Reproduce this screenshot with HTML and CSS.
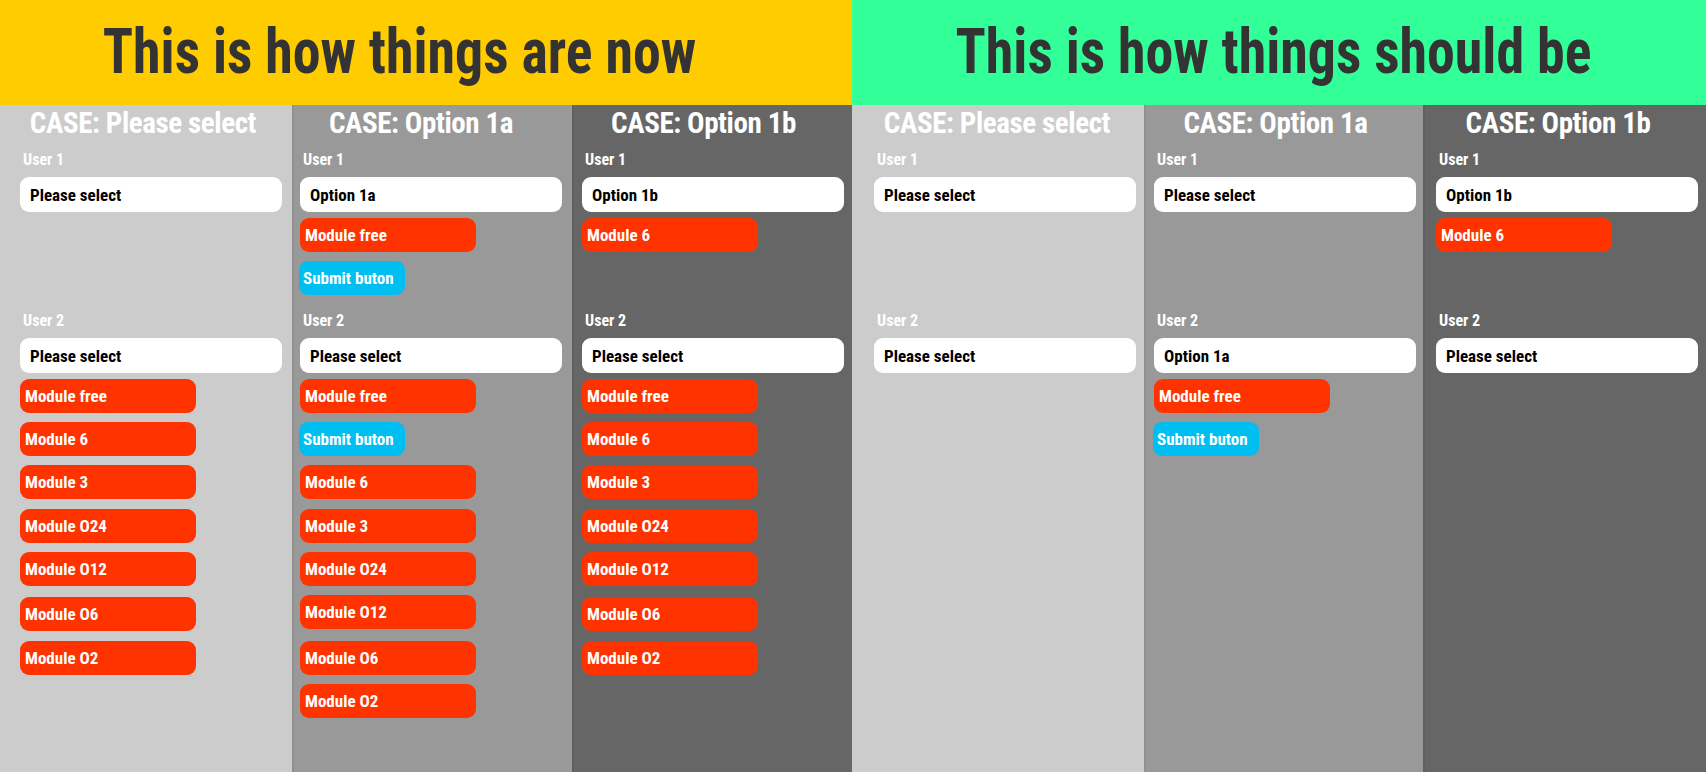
FILE: index.html
```html
<!DOCTYPE html>
<html lang="en">

<head>
    <meta charset="UTF-8">
    <meta name="viewport" content="width=device-width, initial-scale=1.0">
    <title>Cases - now vs should be</title>
    <link rel="stylesheet" href="styles.css">
</head>

<body>
    <main class="board">
        <!-- left half: current behaviour -->
        <section class="half now">
            <h1 class="banner"><span>This is how things are now</span></h1>
            <div class="cases">
                <div class="case light col-1">
                    <h2 class="case-title">CASE: Please select</h2>
                    <div class="case-body">
                        <div class="user">
                            <div class="user-label">User 1</div>
                            <div class="select">Please select</div>
                        </div>
                        <div class="user">
                            <div class="user-label">User 2</div>
                            <div class="select">Please select</div>
                            <div class="modules">
                                <div class="module">Module free</div>
                                <div class="module">Module 6</div>
                                <div class="module">Module 3</div>
                                <div class="module">Module O24</div>
                                <div class="module">Module O12</div>
                                <div class="module wide-gap">Module O6</div>
                                <div class="module">Module O2</div>
                            </div>
                        </div>
                    </div>
                </div>

                <div class="case mid col-2">
                    <h2 class="case-title">CASE: Option 1a</h2>
                    <div class="case-body">
                        <div class="user">
                            <div class="user-label">User 1</div>
                            <div class="select">Option 1a</div>
                            <div class="modules">
                                <div class="module">Module free</div>
                                <div class="submit">Submit buton</div>
                            </div>
                        </div>
                        <div class="user">
                            <div class="user-label">User 2</div>
                            <div class="select">Please select</div>
                            <div class="modules">
                                <div class="module">Module free</div>
                                <div class="submit">Submit buton</div>
                                <div class="module">Module 6</div>
                                <div class="module">Module 3</div>
                                <div class="module">Module O24</div>
                                <div class="module">Module O12</div>
                                <div class="module wide-gap">Module O6</div>
                                <div class="module">Module O2</div>
                            </div>
                        </div>
                    </div>
                </div>

                <div class="case dark col-3">
                    <h2 class="case-title">CASE: Option 1b</h2>
                    <div class="case-body">
                        <div class="user">
                            <div class="user-label">User 1</div>
                            <div class="select">Option 1b</div>
                            <div class="modules">
                                <div class="module">Module 6</div>
                            </div>
                        </div>
                        <div class="user">
                            <div class="user-label">User 2</div>
                            <div class="select">Please select</div>
                            <div class="modules">
                                <div class="module">Module free</div>
                                <div class="module">Module 6</div>
                                <div class="module">Module 3</div>
                                <div class="module">Module O24</div>
                                <div class="module">Module O12</div>
                                <div class="module wide-gap">Module O6</div>
                                <div class="module">Module O2</div>
                            </div>
                        </div>
                    </div>
                </div>
            </div>
        </section>

        <!-- right half: expected behaviour -->
        <section class="half should">
            <h1 class="banner"><span>This is how things should be</span></h1>
            <div class="cases">
                <div class="case light col-4">
                    <h2 class="case-title">CASE: Please select</h2>
                    <div class="case-body">
                        <div class="user">
                            <div class="user-label">User 1</div>
                            <div class="select">Please select</div>
                        </div>
                        <div class="user">
                            <div class="user-label">User 2</div>
                            <div class="select">Please select</div>
                        </div>
                    </div>
                </div>

                <div class="case mid col-5">
                    <h2 class="case-title">CASE: Option 1a</h2>
                    <div class="case-body">
                        <div class="user">
                            <div class="user-label">User 1</div>
                            <div class="select">Please select</div>
                        </div>
                        <div class="user">
                            <div class="user-label">User 2</div>
                            <div class="select">Option 1a</div>
                            <div class="modules">
                                <div class="module">Module free</div>
                                <div class="submit">Submit buton</div>
                            </div>
                        </div>
                    </div>
                </div>

                <div class="case dark col-6">
                    <h2 class="case-title">CASE: Option 1b</h2>
                    <div class="case-body">
                        <div class="user">
                            <div class="user-label">User 1</div>
                            <div class="select">Option 1b</div>
                            <div class="modules">
                                <div class="module">Module 6</div>
                            </div>
                        </div>
                        <div class="user">
                            <div class="user-label">User 2</div>
                            <div class="select">Please select</div>
                        </div>
                    </div>
                </div>
            </div>
        </section>
    </main>
</body>

</html>
```

FILE: styles.css
```css
html,
body {
    margin: 0;
    height: 100%;
    overflow: hidden;
}

body {
    font-family: 'Roboto Condensed', Roboto, sans-serif;
    font-weight: 700;
}

.board {
    display: grid;
    grid-template-columns: 852px 854px;
    height: 772px;
}

.half {
    display: flex;
    flex-direction: column;
}

.banner {
    height: 105px;
    margin: 0;
    display: flex;
    align-items: center;
    justify-content: center;
    padding-bottom: 3px;
    box-sizing: border-box;
    font-size: 63px;
    line-height: 1;
    color: rgb(51, 51, 51);
}

/* the mockup font is narrower than Roboto Condensed */
.banner span {
    display: inline-block;
    white-space: nowrap;
    transform: scaleX(0.887);
}

.now .banner {
    background-color: rgb(255, 204, 0);
    padding-right: 54px;
}

.should .banner {
    background-color: rgb(51, 255, 153);
    padding-right: 12px;
}

.cases {
    flex: 1;
    display: grid;
}

.now .cases {
    grid-template-columns: 292px 280px 280px;
}

.should .cases {
    grid-template-columns: 292px 279px 283px;
}

.case {
    padding-top: 4px;
    color: white;
}

.case + .case {
    box-shadow: inset 2px 0 0 rgba(0, 0, 0, 0.06);
}

.light {
    background-color: rgb(204, 204, 204);
}

.mid {
    background-color: rgb(153, 153, 153);
}

.dark {
    background-color: rgb(102, 102, 102);
}

/* each column is offset a bit differently in the mockup */
.col-1 { --pad: 20px; --shift: 6px; }
.col-2 { --pad: 8px; --shift: 22px; }
.col-3 { --pad: 10px; --shift: 17px; }
.col-4 { --pad: 22px; --shift: 2px; }
.col-5 { --pad: 10px; --shift: 16px; }
.col-6 { --pad: 13px; --shift: 13px; }

.case-title {
    margin: 0 0 14px;
    padding-right: var(--shift);
    text-align: center;
    font-size: 29px;
    line-height: 29px;
    letter-spacing: -0.4px;
}

.case-body {
    padding-left: var(--pad);
}

.user {
    min-height: 161px;
}

.user-label {
    font-size: 16px;
    line-height: 16px;
    padding-left: 3px;
    margin-bottom: 9px;
}

.select {
    width: 262px;
    height: 35px;
    box-sizing: border-box;
    padding-left: 10px;
    display: flex;
    align-items: center;
    border-radius: 9px;
    background-color: white;
    color: black;
    font-size: 17px;
    margin-bottom: 6px;
}

.modules {
    display: flex;
    flex-direction: column;
    align-items: flex-start;
    gap: 9.2px;
}

.module,
.submit {
    height: 34px;
    box-sizing: border-box;
    display: flex;
    align-items: center;
    border-radius: 9px;
    font-size: 17px;
    color: white;
}

.module {
    width: 176px;
    padding-left: 5px;
    background-color: rgb(255, 51, 0);
}

.module.wide-gap {
    margin-top: 2.5px;
}

.submit {
    width: 106px;
    margin-left: -1px;
    padding-left: 4px;
    background-color: rgb(0, 191, 240);
}
```
